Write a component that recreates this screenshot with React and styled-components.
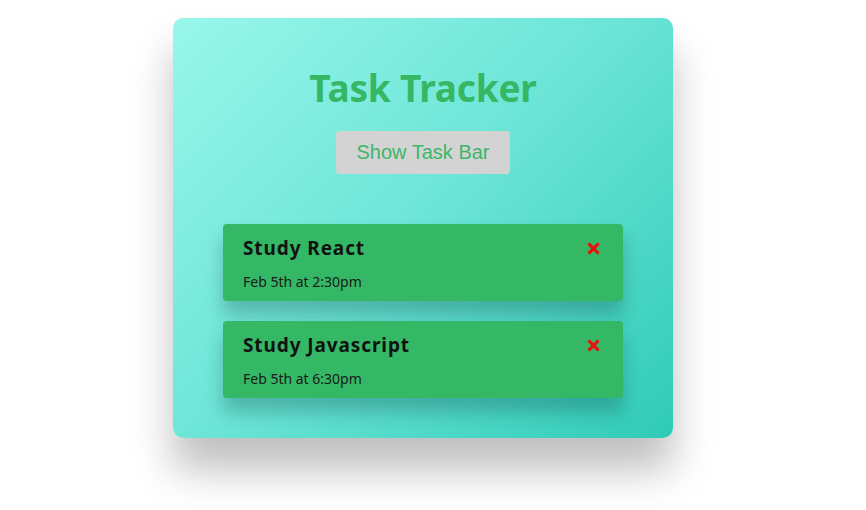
import React from 'react';
import styled, { createGlobalStyle } from 'styled-components';
import { FaTimes } from 'react-icons/fa';

const GlobalStyle = createGlobalStyle`
  * { box-sizing: border-box; }
  body {
    margin: 0;
    background: #fff;
    font-family: "Noto Sans", "Open Sans", sans-serif;
  }
`;

const Page = styled.div`
  width: 846px;
  min-height: 510px;
  padding-top: 18px;
`;

const Container = styled.div`
  width: 500px;
  margin: 0 auto;
  padding: 46px 50px 40px;
  border-radius: 10px;
  background: linear-gradient(135deg, #98f7ea 0%, #6ae4d6 50%, #2fcbb7 100%);
  box-shadow: 0 32px 40px rgba(0, 0, 0, 0.25);
`;

const Header = styled.header`
  display: flex;
  flex-direction: column;
  align-items: center;
  gap: 19px;
  margin-bottom: 50px;
`;

const Title = styled.h1`
  margin: 0;
  font-size: 37px;
  line-height: 48px;
  font-weight: 700;
  color: #35b764;
  letter-spacing: -0.2px;
`;

const Button = styled.button`
  width: 174px;
  height: 43px;
  border: none;
  border-radius: 4px;
  background: #d3d3d3;
  color: #3cb66a;
  font-family: "Liberation Sans", Arial, sans-serif;
  font-size: 20px;
  cursor: pointer;
`;

const TaskList = styled.div`
  display: flex;
  flex-direction: column;
  gap: 20px;
`;

const Task = styled.div`
  height: 77px;
  padding: 11px 20px 0;
  border-radius: 4px;
  background: #34b865;
  box-shadow: 0 14px 18px rgba(0, 40, 40, 0.25);
`;

const TaskTitle = styled.h3`
  display: flex;
  justify-content: space-between;
  align-items: center;
  margin: 0;
  font-size: 19px;
  line-height: 26px;
  font-weight: 700;
  letter-spacing: 0.9px;
  color: #111;
`;

const Close = styled(FaTimes)`
  color: #e8120c;
  font-size: 17px;
  margin-right: 1px;
  cursor: pointer;
`;

const TaskDate = styled.p`
  margin: 11px 0 0;
  font-size: 14px;
  line-height: 20px;
  color: #1a1a1a;
`;

const tasks = [
  { id: 1, text: 'Study React', day: 'Feb 5th at 2:30pm' },
  { id: 2, text: 'Study Javascript', day: 'Feb 5th at 6:30pm' },
];

export default function App() {
  return (
    <Page>
      <GlobalStyle />
      <Container>
        <Header>
          <Title>Task Tracker</Title>
          <Button>Show Task Bar</Button>
        </Header>
        <TaskList>
          {tasks.map((task) => (
            <Task key={task.id}>
              <TaskTitle>
                {task.text}
                <Close />
              </TaskTitle>
              <TaskDate>{task.day}</TaskDate>
            </Task>
          ))}
        </TaskList>
      </Container>
    </Page>
  );
}
